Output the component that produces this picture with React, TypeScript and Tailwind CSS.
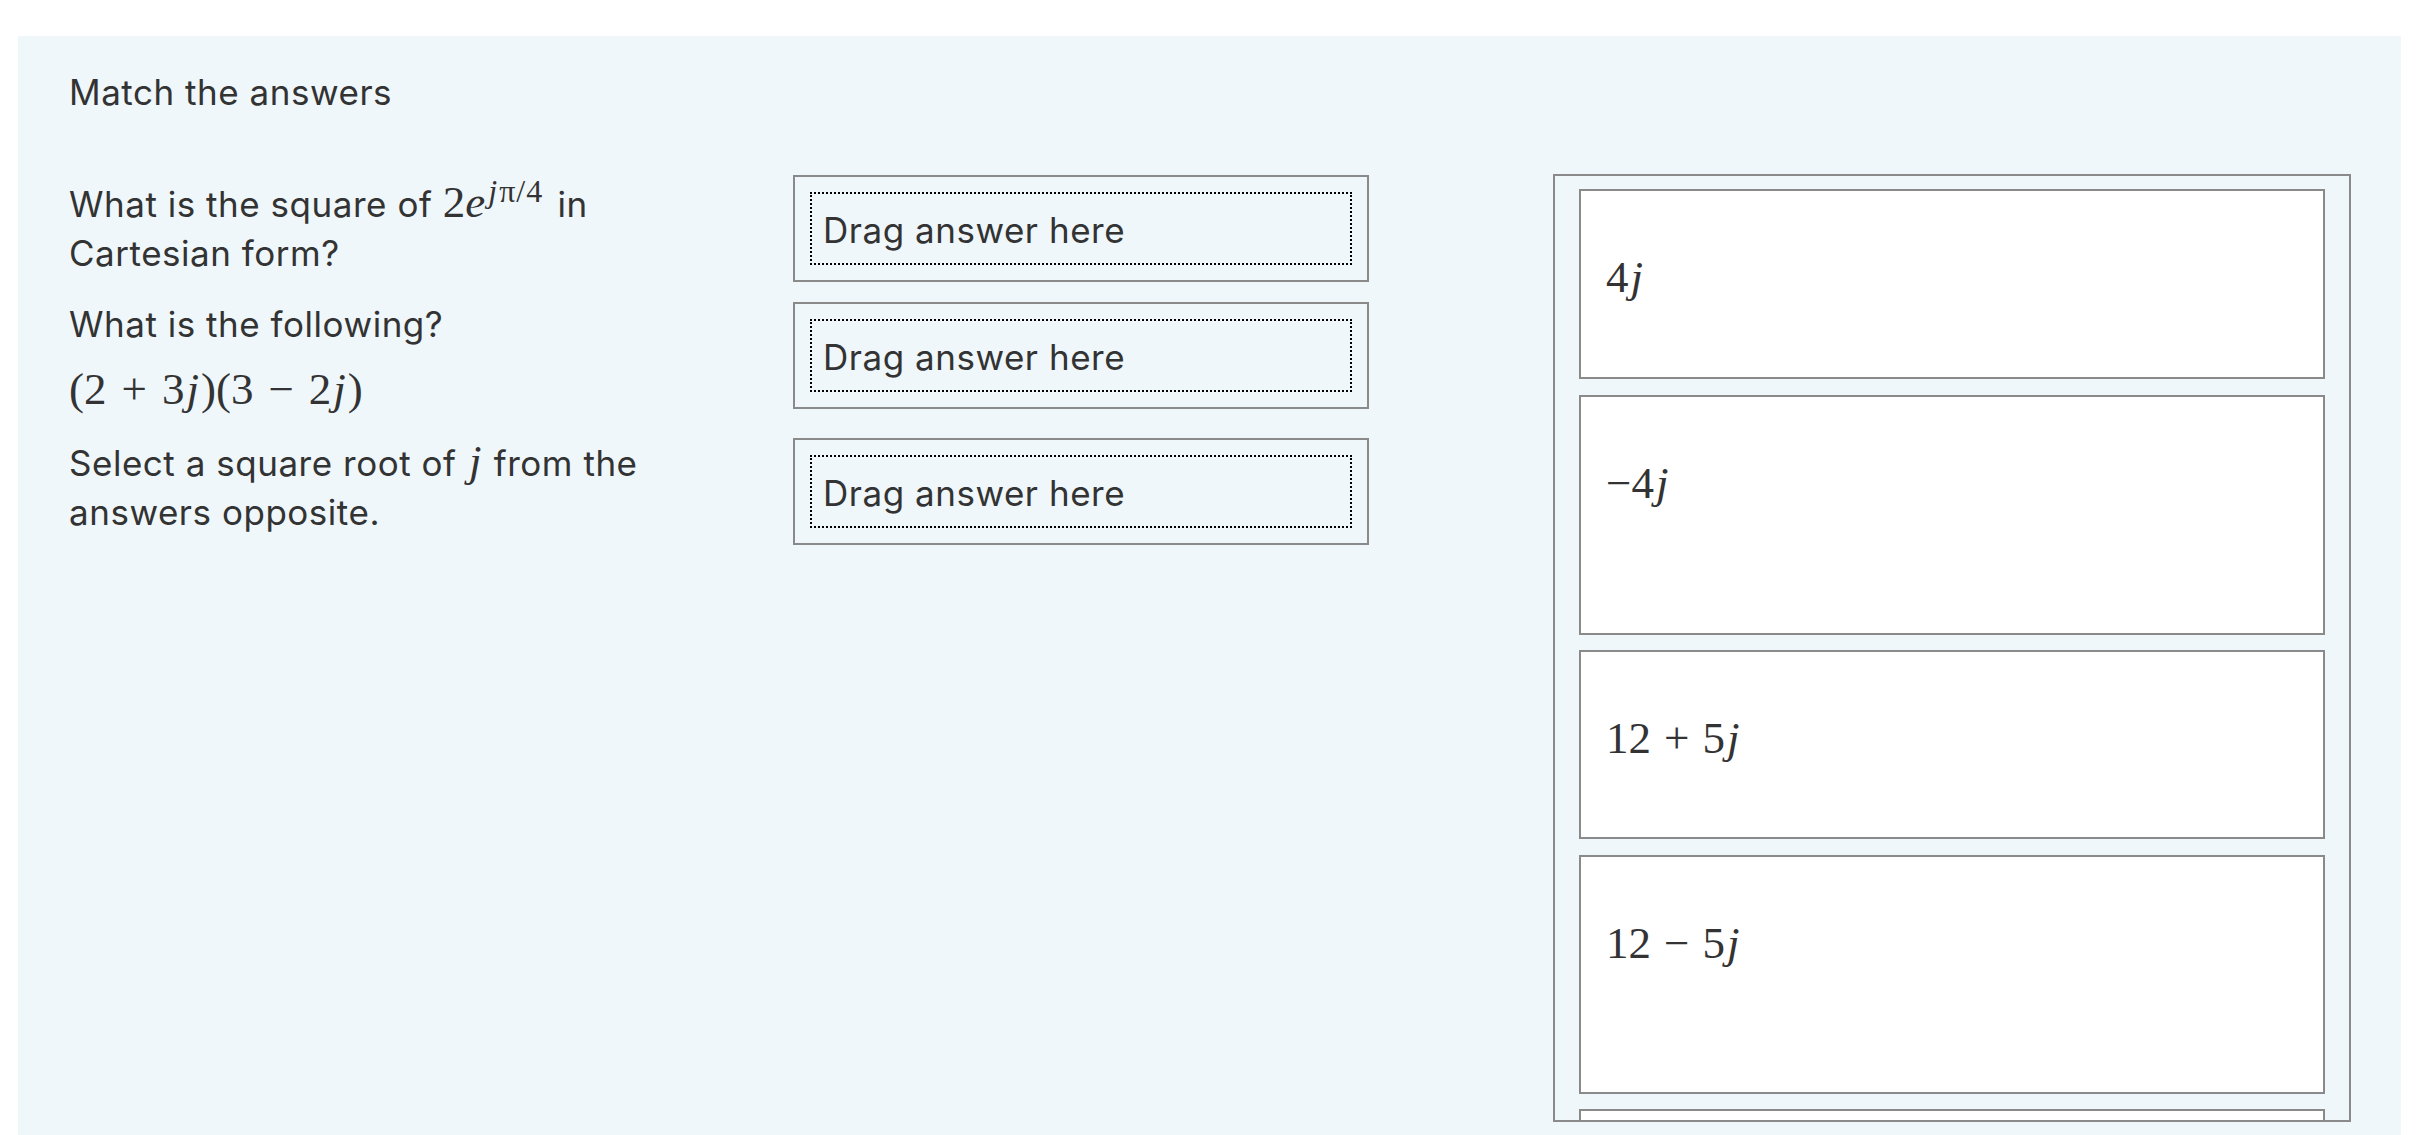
import React from 'react';

const M = ({ children, className = '' }: { children: React.ReactNode; className?: string }) => (
  <span className={`font-['Liberation_Serif',serif] text-[45px] leading-none tracking-normal ${className}`}>{children}</span>
);

const J = () => <i className="italic pl-[2px] pr-[2px]">j</i>;

const DropBox = () => (
  <div className="w-[576px] h-[107px] shrink-0 border-2 border-[#8a8a8a] p-[15px]">
    <div className="h-full border-2 border-dotted border-black flex items-center px-[11px] pt-[4px]">
      Drag answer here
    </div>
  </div>
);

const answers: { h: string; content: React.ReactNode }[] = [
  { h: 'h-[190px]', content: <>4<J /></> },
  { h: 'h-[240px]', content: <>−4<J /></> },
  { h: 'h-[189px]', content: <>12<span className="mx-[13px]">+</span>5<J /></> },
  { h: 'h-[239px]', content: <>12<span className="mx-[13px]">−</span>5<J /></> },
  { h: 'h-[200px]', content: null },
];

export default function App() {
  return (
    <div className="h-[1135px] overflow-hidden bg-white pt-[36px] pl-[18px] pr-[15px] font-['Inter',sans-serif] text-[35px] leading-[49px] tracking-[0.015em] text-[#333]">
      <div className="bg-[#eff7fb] h-[1200px] pl-[51px] pr-[50px] pt-[34px]">
        <p className="leading-[45px]">Match the answers</p>

        <div className="flex items-start mt-[59px]">
          <div className="flex flex-col pt-[1px]">
            {/* question 1 */}
            <div className="flex items-start">
              <div className="w-[724px] whitespace-nowrap">
                What is the square of{' '}
                <M>
                  2<i className="pr-[1px]">e</i>
                  <span className="text-[32px] align-[15px] tracking-[1px] pl-[2px] pr-[4px]">
                    <i className="pr-[1px]">j</i>π/4
                  </span>
                </M>{' '}
                in
                <br />
                Cartesian form?
              </div>
              <DropBox />
            </div>

            {/* question 2 */}
            <div className="flex items-start mt-5">
              <div className="w-[724px] whitespace-nowrap -mt-[2px]">
                <p>What is the following?</p>
                <p className="mt-[18px]">
                  <M>
                    (2<span className="mx-[15px]">+</span>3<J />)(3<span className="mx-[15px]">−</span>2<J />)
                  </M>
                </p>
              </div>
              <DropBox />
            </div>

            {/* question 3 */}
            <div className="flex items-start mt-[22px]">
              <div className="w-[724px] pt-[1px] whitespace-nowrap">
                Select a square root of <M><J /></M> from the
                <br />
                answers opposite.
              </div>
              <DropBox />
            </div>
          </div>

          <div className="ml-auto w-[798px] h-[948px] shrink-0 border-2 border-[#8a8a8a] overflow-hidden px-[24px] pt-[13px] flex flex-col gap-[15.5px]">
            {answers.map((a, i) => (
              <div key={i} className={`${a.h} shrink-0 bg-white border-2 border-[#8a8a8a] pl-[25px] pt-[64px]`}>
                {a.content && <M>{a.content}</M>}
              </div>
            ))}
          </div>
        </div>
      </div>
    </div>
  );
}
